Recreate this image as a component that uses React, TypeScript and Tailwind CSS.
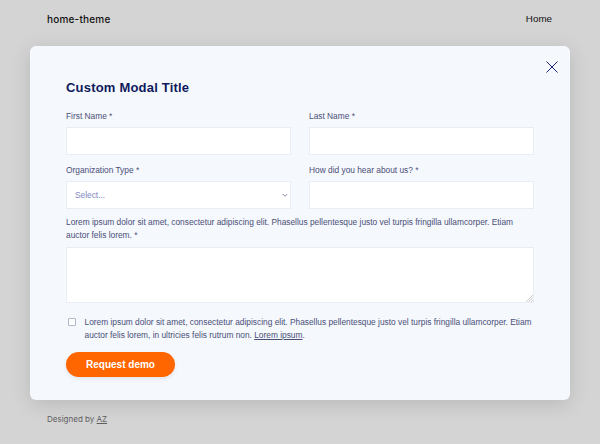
export default function App() {
  return (
    <div className="w-[600px] h-[444px] overflow-hidden flex flex-col bg-[#d4d4d4] font-['Inter',sans-serif]">
      <header className="h-[46px] shrink-0 flex items-center justify-between pl-[47px] pr-[48px] pb-[7px]">
        <span className="text-[10px] font-medium tracking-[0.2px] text-[#111]">home-theme</span>
        <a className="text-[9.8px] font-['Liberation_Sans',sans-serif] text-[#111]">Home</a>
      </header>

      <main className="relative ml-[30px] w-[539.5px] h-[354px] shrink-0 rounded-[6px] bg-[#f5f8fd] shadow-[0_4px_20px_rgba(0,0,0,0.13)] pl-[36px] pr-[36px] pt-[35px] font-['Liberation_Sans',sans-serif]">
        <button className="absolute right-[10.5px] top-[14px] text-[#1a2570]">
          <svg width="14" height="14" viewBox="0 0 14 14" fill="none" stroke="currentColor" strokeWidth="1">
            <path d="M1.5 1.5 12.5 12.5M12.5 1.5 1.5 12.5" />
          </svg>
        </button>

        <h2 className="text-[13px] leading-[14px] font-bold tracking-[0.2px] text-[#0f1a5c]">Custom Modal Title</h2>

        <form className="mt-[16px]">
          <div className="grid grid-cols-2 gap-x-[18.5px] gap-y-[9.5px]">
            <label className="flex flex-col">
              <span className="text-[8.36px] leading-[11px] mb-[5px] text-[#4a4f78]">First Name *</span>
              <input className="h-[28px] bg-white border border-[#e9edf5] outline-none" />
            </label>
            <label className="flex flex-col">
              <span className="text-[8.36px] leading-[11px] mb-[5px] text-[#4a4f78]">Last Name *</span>
              <input className="h-[28px] bg-white border border-[#e9edf5] outline-none" />
            </label>
            <label className="flex flex-col">
              <span className="text-[8.36px] leading-[11px] mb-[5px] text-[#4a4f78]">Organization Type *</span>
              <div className="relative">
                <select className="w-full h-[28px] appearance-none bg-white border border-[#e9edf5] pl-[8px] text-[8.36px] text-[#7f88c4] outline-none">
                  <option>Select...</option>
                </select>
                <svg className="absolute right-[3px] top-[12px] text-[#6a7199]" width="6" height="5" viewBox="0 0 6 5" fill="none" stroke="currentColor" strokeWidth="0.8">
                  <path d="M0.8 1 3 3.4 5.2 1" />
                </svg>
              </div>
            </label>
            <label className="flex flex-col">
              <span className="text-[8.36px] leading-[11px] mb-[5px] text-[#4a4f78]">How did you hear about us? *</span>
              <input className="h-[28px] bg-white border border-[#e9edf5] outline-none" />
            </label>
          </div>

          <label className="flex flex-col mt-[7.5px]">
            <span className="text-[8.36px] leading-[13px] mb-[5px] text-[#4a4f78]">
              Lorem ipsum dolor sit amet, consectetur adipiscing elit. Phasellus pellentesque justo vel turpis fringilla ullamcorper. Etiam auctor felis lorem. *
            </span>
            <div className="relative">
              <textarea className="block w-full h-[56px] resize-none bg-white border border-[#e9edf5] outline-none" />
              <svg className="absolute right-[1px] bottom-[1px] text-[#a5a8b0]" width="7" height="7" viewBox="0 0 7 7" fill="none" stroke="currentColor" strokeWidth="0.6">
                <path d="M7 0 0 7M7 2.5 2.5 7M7 5 5 7" />
              </svg>
            </div>
          </label>

          <div className="flex mt-[12.5px]">
            <input type="checkbox" className="appearance-none w-[8px] h-[8px] mt-[2px] ml-[2px] mr-[8.5px] shrink-0 rounded-[1px] bg-white border border-[#b4b7c6]" />
            <p className="text-[8.36px] leading-[13px] text-[#4a4f78]">
              Lorem ipsum dolor sit amet, consectetur adipiscing elit. Phasellus pellentesque justo vel turpis fringilla ullamcorper. Etiam auctor felis lorem, in ultricies felis rutrum non. <a className="underline">Lorem ipsum</a>.
            </p>
          </div>

          <button type="button" className="mt-[10px] w-[109px] h-[25px] rounded-full bg-[#ff6600] text-white text-[10px] font-bold shadow-[0_2px_4px_rgba(0,0,0,0.08)]">
            Request demo
          </button>
        </form>
      </main>

      <footer className="pl-[47px] pt-[13px] text-[8px] leading-[12px] text-[#5f5f5f]">
        Designed by <a className="underline">AZ</a>
      </footer>
    </div>
  );
}
